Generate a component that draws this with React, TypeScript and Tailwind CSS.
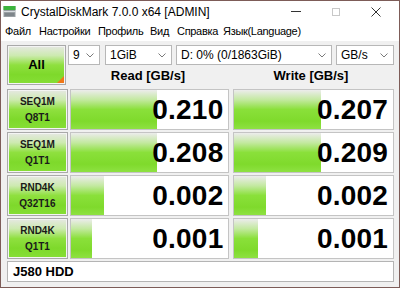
const rows = [
  { l1: "SEQ1M", l2: "Q8T1", read: "0.210", write: "0.207", rw: 86, ww: 87 },
  { l1: "SEQ1M", l2: "Q1T1", read: "0.208", write: "0.209", rw: 86, ww: 87 },
  { l1: "RND4K", l2: "Q32T16", read: "0.002", write: "0.002", rw: 33, ww: 32 },
  { l1: "RND4K", l2: "Q1T1", read: "0.001", write: "0.001", rw: 21, ww: 24 },
];

const menu = [
  { t: "Файл", w: "w-[34px]" },
  { t: "Настройки", w: "w-[59px]" },
  { t: "Профиль", w: "w-[52px]" },
  { t: "Вид", w: "w-[27px]" },
  { t: "Справка", w: "w-[46px]" },
  { t: "Язык(Language)", w: "w-auto" },
];

const btn =
  "border border-[#a9a9a9] shadow-[inset_0_0_0_1px_#f4f4f4] bg-[linear-gradient(to_bottom,#e6e8e3_0%,#cdeab0_25%,#8fe03f_50%,#7ed92b_75%,#86de36_100%)]";
const bar =
  "bg-[linear-gradient(to_bottom,#ececec_0%,#c3e9a0_25%,#8ae03a_50%,#7fda2c_80%,#8ee142_100%)]";

const Combo = ({ text, w }: { text: string; w: string }) => (
  <div className={`${w} h-[20px] bg-white border border-[#b7b7b7] flex items-center justify-between pl-[4px] pr-[5px] text-[12px] text-black`}>
    <span>{text}</span>
    <svg width="8" height="5" viewBox="0 0 8 5">
      <path d="M0.5 0.5 L4 4 L7.5 0.5" fill="none" stroke="#7a7a7a" strokeWidth="1" />
    </svg>
  </div>
);

const Cell = ({ value, width }: { value: string; width: number }) => (
  <div className="relative h-full bg-white border border-[#c4c4c4] flex items-center justify-end pr-[5px]">
    <div className={`absolute left-0 top-0 bottom-0 ${bar}`} style={{ width }} />
    <span className="relative text-[28px] font-bold leading-none text-black tracking-[0.2px]">{value}</span>
  </div>
);

export default function App() {
  return (
    <div className="w-[400px] h-[288px] border border-[#7d5c58] bg-[#f0f0f0] flex flex-col overflow-hidden" style={{ fontFamily: '"Liberation Sans", Arial, sans-serif' }}>
      {/* title bar */}
      <div className="h-[21px] bg-white flex items-center pl-[2px] shrink-0">
        <svg width="13" height="13" viewBox="0 0 13 13" className="mr-[5px]">
          <rect x="0.5" y="1" width="12" height="11" fill="#9aa0a4" />
          <rect x="0.5" y="1" width="12" height="4" fill="#3cb43c" />
          <rect x="0.5" y="6" width="12" height="1" fill="#d8dcdf" />
          <rect x="1.5" y="8" width="10" height="3" fill="#7e858a" />
        </svg>
        <span className="text-[12px] text-black">CrystalDiskMark 7.0.0 x64 [ADMIN]</span>
        <div className="ml-auto flex items-center h-full">
          <div className="w-[40px] flex justify-center">
            <div className="w-[10px] h-px bg-[#333]" />
          </div>
          <div className="w-[40px] flex justify-center">
            <div className="w-[8px] h-[8px] border border-[#c8c8c8]" />
          </div>
          <div className="w-[40px] flex justify-center mr-[3px]">
            <svg width="10" height="10" viewBox="0 0 10 10">
              <path d="M0.5 0.5 L9.5 9.5 M9.5 0.5 L0.5 9.5" stroke="#333" strokeWidth="1" />
            </svg>
          </div>
        </div>
      </div>
      {/* menu */}
      <div className="h-[19px] bg-white flex items-center pl-[4px] text-[11px] tracking-[-0.3px] text-black shrink-0">
        {menu.map((m) => (
          <span key={m.t} className={`${m.w} whitespace-nowrap`}>{m.t}</span>
        ))}
      </div>
      {/* body */}
      <div className="flex flex-col pl-[6px] pr-[5px] pt-[4px] gap-[2px]">
        <div className="flex gap-[2px] h-[42px]">
          <div className={`relative w-[61px] h-[40px] ${btn} flex items-center justify-center text-[13px] font-bold text-black`}>
            All
            <div className="absolute right-[1px] bottom-[1px] w-0 h-0 border-l-[7px] border-l-transparent border-b-[7px] border-b-[#f07818]" />
          </div>
          <div className="flex flex-col flex-1">
            <div className="flex gap-[4px]">
              <Combo text="9" w="w-[32px]" />
              <Combo text="1GiB" w="w-[67px] ml-[1px]" />
              <Combo text="D: 0% (0/1863GiB)" w="w-[156px]" />
              <Combo text="GB/s" w="w-[58px]" />
            </div>
            <div className="flex flex-1 items-center text-[13px] font-bold text-black">
              <div className="w-[160px] text-center">Read [GB/s]</div>
              <div className="w-[160px] ml-[3px] text-center">Write [GB/s]</div>
            </div>
          </div>
        </div>
        {rows.map((r) => (
          <div key={r.l1 + r.l2} className="flex gap-[2px] h-[41px]">
            <div className={`w-[61px] h-full ${btn} flex flex-col items-center justify-center text-[10px] font-bold text-[#1a1a1a] leading-[16px]`}>
              <span>{r.l1}</span>
              <span>{r.l2}</span>
            </div>
            <div className="w-[160px] h-full">
              <Cell value={r.read} width={r.rw} />
            </div>
            <div className="w-[161px] h-full ml-[2px]">
              <Cell value={r.write} width={r.ww} />
            </div>
          </div>
        ))}
        <div className="h-[21px] bg-white border border-[#b4b4b4] flex items-center pl-[5px] text-[13px] font-bold text-black">
          J580 HDD
        </div>
      </div>
    </div>
  );
}
